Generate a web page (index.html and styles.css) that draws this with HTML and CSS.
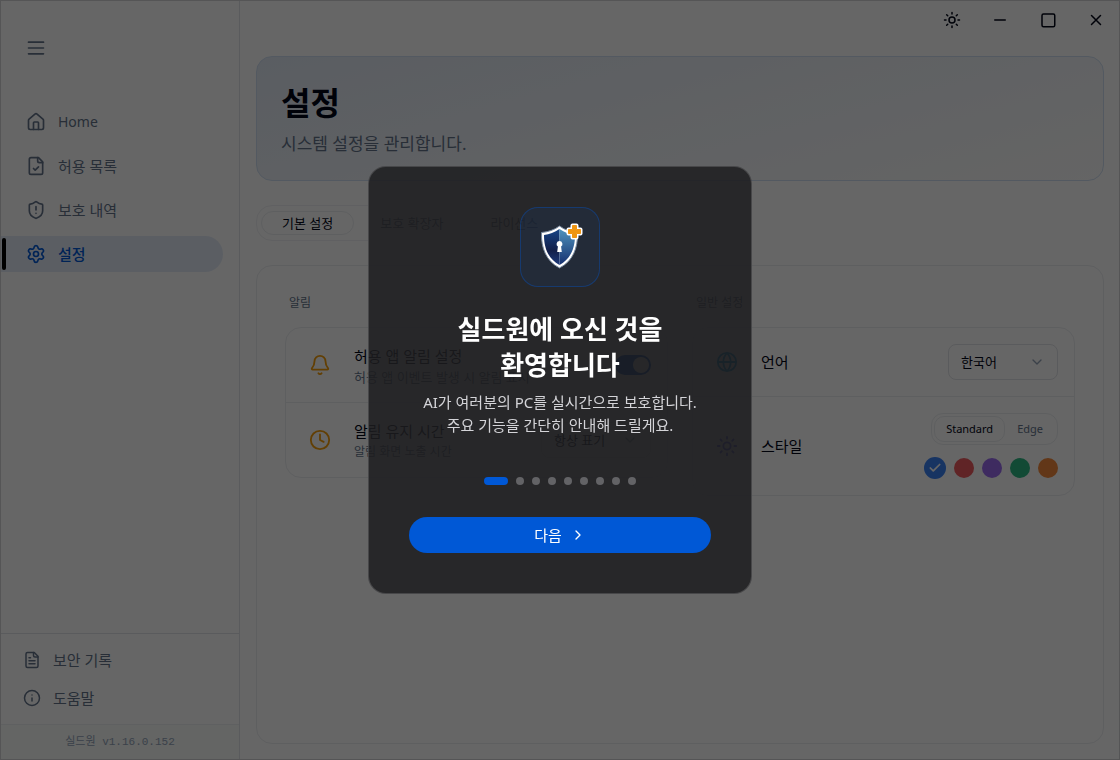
FILE: index.html
```html
<!DOCTYPE html>
<html lang="ko">

<head>
  <meta charset="utf-8">
  <title>실드원</title>
  <link rel="stylesheet" href="styles.css">
</head>

<body>

  <div class="app">

    <aside class="sidebar">
      <button class="menu-button" aria-label="메뉴">
        <svg class="icon" width="20" height="20" viewBox="0 0 24 24"><path d="M3 5h18M3 12h18M3 19h18"/></svg>
      </button>

      <nav class="nav">
        <a class="nav-item latin" href="#">
          <svg class="icon" width="20" height="20" viewBox="0 0 24 24"><path d="M15 21v-8a1 1 0 0 0-1-1h-4a1 1 0 0 0-1 1v8"/><path d="M3 10a2 2 0 0 1 .7-1.5l7-6a2 2 0 0 1 2.6 0l7 6A2 2 0 0 1 21 10v9a2 2 0 0 1-2 2H5a2 2 0 0 1-2-2z"/></svg>
          Home
        </a>
        <a class="nav-item" href="#">
          <svg class="icon" width="20" height="20" viewBox="0 0 24 24"><path d="M15 2H6a2 2 0 0 0-2 2v16a2 2 0 0 0 2 2h12a2 2 0 0 0 2-2V7z"/><path d="M14 2v4a2 2 0 0 0 2 2h4"/><path d="m9 15 2 2 4-4"/></svg>
          허용 목록
        </a>
        <a class="nav-item" href="#">
          <svg class="icon" width="20" height="20" viewBox="0 0 24 24"><path d="M20 13c0 5-3.5 7.500-7.660 8.950a1 1 0 0 1-.67-.01C7.500 20.500 4 18 4 13V6a1 1 0 0 1 1-1c2 0 4.500-1.200 6.240-2.720a1.170 1.170 0 0 1 1.520 0C14.510 3.810 17 5 19 5a1 1 0 0 1 1 1z"/><path d="M12 8v4M12 16h.01"/></svg>
          보호 내역
        </a>
        <a class="nav-item active" href="#">
          <svg class="icon" width="20" height="20" viewBox="0 0 24 24"><path d="M9.670 4.140a2.340 2.340 0 0 1 4.660 0 2.340 2.340 0 0 0 3.320 1.910 2.340 2.340 0 0 1 2.330 4.030 2.340 2.340 0 0 0 0 3.840 2.340 2.340 0 0 1-2.330 4.030 2.340 2.340 0 0 0-3.320 1.910 2.340 2.340 0 0 1-4.660 0 2.340 2.340 0 0 0-3.320-1.910 2.340 2.340 0 0 1-2.330-4.030 2.340 2.340 0 0 0 0-3.840 2.340 2.340 0 0 1 2.330-4.030 2.340 2.340 0 0 0 3.320-1.910"/><circle cx="12" cy="12" r="3"/></svg>
          설정
        </a>
      </nav>

      <div class="side-links">
        <a class="side-link" href="#">
          <svg class="icon" width="18" height="18" viewBox="0 0 24 24"><path d="M15 2H6a2 2 0 0 0-2 2v16a2 2 0 0 0 2 2h12a2 2 0 0 0 2-2V7z"/><path d="M14 2v4a2 2 0 0 0 2 2h4M10 9H8M16 13H8M16 17H8"/></svg>
          보안 기록
        </a>
        <a class="side-link" href="#">
          <svg class="icon" width="18" height="18" viewBox="0 0 24 24"><circle cx="12" cy="12" r="10"/><path d="M12 16v-4M12 8h.01"/></svg>
          도움말
        </a>
      </div>
      <div class="version">실드원 v1.16.0.152</div>
    </aside>

    <div class="main">
      <div class="titlebar">
        <button class="window-button" aria-label="테마">
          <svg class="icon" width="18" height="18" viewBox="0 0 24 24"><circle cx="12" cy="12" r="4"/><path d="M12 2v2M12 20v2M4.900 4.900l1.400 1.400M17.700 17.700l1.400 1.400M2 12h2M20 12h2M6.300 17.700l-1.400 1.400M19.100 4.900l-1.400 1.400"/></svg>
        </button>
        <button class="window-button" aria-label="최소화">
          <svg class="icon" width="18" height="18" viewBox="0 0 24 24"><path d="M5 12h14"/></svg>
        </button>
        <button class="window-button" aria-label="최대화">
          <svg class="icon" width="18" height="18" viewBox="0 0 24 24"><rect x="4" y="4" width="17" height="17" rx="2"/></svg>
        </button>
        <button class="window-button" aria-label="닫기">
          <svg class="icon" width="18" height="18" viewBox="0 0 24 24"><path d="M18 6 6 18M6 6l12 12"/></svg>
        </button>
      </div>

      <main class="content">
        <header class="banner">
          <h1>설정</h1>
          <p>시스템 설정을 관리합니다.</p>
        </header>

        <div class="tabs">
          <button class="tab active">기본 설정</button>
          <button class="tab">보호 확장자</button>
          <button class="tab">라이선스</button>
        </div>

        <div class="panel">
          <section class="column">
            <h2>알림</h2>
            <div class="group">
              <div class="row">
                <svg class="icon amber" width="22" height="22" viewBox="0 0 24 24"><path d="M10.270 21a2 2 0 0 0 3.460 0"/><path d="M3.260 15.330A1 1 0 0 0 4 17h16a1 1 0 0 0 .74-1.670C19.410 13.960 18 12.500 18 8A6 6 0 0 0 6 8c0 4.500-1.410 5.960-2.740 7.330"/></svg>
                <label class="row-text" for="appAlarm">
                  <span class="row-title">허용 앱 알림 설정</span>
                  <span class="row-desc">허용 앱 이벤트 발생 시 알림 표시</span>
                </label>
                <input class="toggle" type="checkbox" id="appAlarm" checked>
              </div>
              <div class="row">
                <svg class="icon amber" width="22" height="22" viewBox="0 0 24 24"><circle cx="12" cy="12" r="10"/><path d="M12 6v6l4 2"/></svg>
                <label class="row-text" for="alarmTime">
                  <span class="row-title">알림 유지 시간</span>
                  <span class="row-desc small">알림 화면 노출 시간</span>
                </label>
                <div class="select">
                  <select id="alarmTime">
                    <option>항상 표기</option>
                  </select>
                  <svg class="icon chevron" width="16" height="16" viewBox="0 0 24 24"><path d="m6 9 6 6 6-6"/></svg>
                </div>
              </div>
            </div>
          </section>

          <section class="column">
            <h2>일반 설정</h2>
            <div class="group">
              <div class="row">
                <svg class="icon sky" width="22" height="22" viewBox="0 0 24 24"><circle cx="12" cy="12" r="10"/><path d="M12 2a14.500 14.500 0 0 0 0 20 14.500 14.500 0 0 0 0-20M2 12h20"/></svg>
                <label class="row-text" for="language">
                  <span class="row-title">언어</span>
                </label>
                <div class="select">
                  <select id="language">
                    <option>한국어</option>
                  </select>
                  <svg class="icon chevron" width="16" height="16" viewBox="0 0 24 24"><path d="m6 9 6 6 6-6"/></svg>
                </div>
              </div>
              <div class="row">
                <svg class="icon violet" width="22" height="22" viewBox="0 0 24 24"><circle cx="12" cy="12" r="4"/><path d="M12 2v2M12 20v2M4.900 4.900l1.400 1.400M17.700 17.700l1.400 1.400M2 12h2M20 12h2M6.300 17.700l-1.400 1.400M19.100 4.900l-1.400 1.400"/></svg>
                <div class="row-text">
                  <span class="row-title">스타일</span>
                </div>
                <div class="style-picker">
                  <div class="segmented">
                    <button class="segment active">Standard</button>
                    <button class="segment">Edge</button>
                  </div>
                  <div class="swatches">
                    <label class="swatch blue"><input type="radio" name="accent" aria-label="파랑" checked><svg class="icon" width="14" height="14" viewBox="0 0 24 24"><path d="M20 6 9 17l-5-5"/></svg></label>
                    <label class="swatch red"><input type="radio" name="accent" aria-label="빨강"></label>
                    <label class="swatch purple"><input type="radio" name="accent" aria-label="보라"></label>
                    <label class="swatch green"><input type="radio" name="accent" aria-label="초록"></label>
                    <label class="swatch orange"><input type="radio" name="accent" aria-label="주황"></label>
                  </div>
                </div>
              </div>
            </div>
          </section>
        </div>
      </main>
    </div>
  </div>

  <div class="overlay">
    <div class="modal" role="dialog" aria-modal="true" aria-labelledby="welcomeTitle">
      <div class="logo">
        <svg width="46" height="48" viewBox="0 0 46 48">
          <defs>
            <linearGradient id="shieldLeft" x1="0" y1="0" x2="0" y2="1">
              <stop offset="0" stop-color="#174486"/>
              <stop offset="0.600" stop-color="#13204a"/>
              <stop offset="1" stop-color="#1d3a7c"/>
            </linearGradient>
            <linearGradient id="shieldRight" x1="0" y1="0" x2="0" y2="1">
              <stop offset="0" stop-color="#4f93bd"/>
              <stop offset="1" stop-color="#16306f"/>
            </linearGradient>
          </defs>
          <path d="M22.500 3C17 7 11 9 4.500 9.500 4 25 9 38 22.500 45 36 38 41 25 40.500 9.500 34 9 28 7 22.500 3z" fill="#fff" stroke="#75879d" stroke-width="1"/>
          <path d="M22.500 6C17.500 9.500 12.500 11.300 7 12c0 13 4 23.500 15.500 30z" fill="url(#shieldLeft)"/>
          <path d="M22.500 6c5 3.500 10 5.300 15.500 6 0 13-4 23.500-15.500 30z" fill="url(#shieldRight)"/>
          <path d="M22.500 18a3 3 0 0 1 1.600 5.500l.7 5.500h-4.600l.7-5.500a3 3 0 0 1 1.600-5.500z" fill="#fff"/>
          <path d="M35.500 2.500h4v4h4v4h-4v4h-4v-4h-4v-4h4z" fill="#fff" stroke="#fff" stroke-width="4" stroke-linejoin="round"/>
          <path d="M35.500 2.500h4v4h4v4h-4v4h-4v-4h-4v-4h4z" fill="#ee9512" stroke="#ee9512" stroke-width="1"/>
        </svg>
      </div>
      <h2 id="welcomeTitle">실드원에 오신 것을<br>환영합니다</h2>
      <p>AI가 여러분의 PC를 실시간으로 보호합니다.<br>주요 기능을 간단히 안내해 드릴게요.</p>
      <div class="dots">
        <span class="dot active"></span>
        <span class="dot"></span>
        <span class="dot"></span>
        <span class="dot"></span>
        <span class="dot"></span>
        <span class="dot"></span>
        <span class="dot"></span>
        <span class="dot"></span>
        <span class="dot"></span>
      </div>
      <button class="next-button">
        다음
        <svg class="icon" width="16" height="16" viewBox="0 0 24 24"><path d="m9 18 6-6-6-6"/></svg>
      </button>
    </div>
  </div>

</body>

</html>
```

FILE: styles.css
```css
* {
  box-sizing: border-box;
}

body {
  margin: 0;
  background: #fff;
  color: #020617;
  font: 15px/20px "Noto Sans", "Noto Sans CJK KR", sans-serif;
}

h1,
h2,
p {
  margin: 0;
}

a {
  color: inherit;
  text-decoration: none;
}

button,
select {
  border: none;
  background: none;
  color: inherit;
  font: inherit;
  padding: 0;
  cursor: pointer;
}

.icon {
  flex: none;
  fill: none;
  stroke: currentColor;
  stroke-width: 2;
  stroke-linecap: round;
  stroke-linejoin: round;
}

.app {
  display: flex;
  min-height: 100vh;
  border: 1px solid #d4d4d8;
}

/* Sidebar */
.sidebar {
  display: flex;
  flex-direction: column;
  width: 239px;
  flex: none;
  border-right: 1px solid #e2e4e8;
  color: #64748b;
}

.menu-button {
  display: flex;
  align-self: flex-start;
  margin: 37px 0 0 25px;
}

.nav {
  display: flex;
  flex-direction: column;
  gap: 8px;
  flex: 1;
  margin-top: 46px;
  padding-right: 16px;
}

.nav-item {
  display: flex;
  align-items: center;
  gap: 12px;
  height: 36px;
  padding-left: 25px;
  border-radius: 0 18px 18px 0;
}

.nav-item.latin {
  font-size: 14px;
}

.nav-item.active {
  position: relative;
  background: #e4ecf8;
  color: #0058d6;
  font-weight: 500;
}

.nav-item.active::before {
  content: "";
  position: absolute;
  left: 1px;
  top: 2px;
  bottom: 2px;
  width: 4px;
  border-radius: 2px;
  background: #000;
}

.side-links {
  padding: 7px 22px;
  border-top: 1px solid #e2e4e8;
}

.side-link {
  display: flex;
  align-items: center;
  gap: 12px;
  height: 38px;
}

.version {
  padding: 8px;
  border-top: 1px solid #eeeff2;
  background: #f9fcfa;
  color: #94a3b8;
  font: 11px/18px "Liberation Mono", "Noto Sans CJK KR", monospace;
  text-align: center;
}

/* Main area */
.main {
  display: flex;
  flex-direction: column;
  flex: 1;
  min-width: 0;
}

.titlebar {
  display: flex;
  justify-content: flex-end;
  height: 38px;
  margin-right: -1px;
}

.window-button {
  display: flex;
  align-items: center;
  justify-content: center;
  width: 48px;
}

.content {
  display: flex;
  flex-direction: column;
  flex: 1;
  gap: 24px;
  padding: 17px 15px 15px 16px;
}

.banner {
  padding: 24px;
  border: 1px solid #cfdff2;
  border-radius: 16px;
  background: linear-gradient(165deg, #e1e9f5, #eff3f8 50%, #fcfcfc);
}

.banner h1 {
  font-size: 32px;
  line-height: 44px;
  font-weight: 700;
}

.banner p {
  margin-top: 7px;
  color: #64748b;
  font-size: 17px;
  line-height: 24px;
}

.tabs {
  display: flex;
  align-self: flex-start;
  gap: 5px;
  padding: 5px 4px;
  border: 1px solid #f0f1f4;
  border-radius: 16px;
}

.tab {
  padding: 1px 20px;
  border: 1px solid transparent;
  border-radius: 12px;
  color: #64748b;
  font-size: 13px;
}

.tab.active {
  border-color: #eceef1;
  color: #020617;
}

.panel {
  display: flex;
  flex: 1;
  align-items: flex-start;
  gap: 24px;
  padding: 28px;
  border: 1px solid #eceef1;
  border-radius: 16px;
}

.column {
  flex: 1;
  min-width: 0;
}

.column h2 {
  margin-bottom: 16px;
  padding-left: 4px;
  color: #64748b;
  font-size: 12px;
  line-height: 17px;
  font-weight: 400;
}

.group {
  border: 1px solid #eceef1;
  border-radius: 16px;
}

.row {
  display: flex;
  align-items: center;
  gap: 23px;
  padding: 16px 16px 16px 23px;
}

.row + .row {
  border-top: 1px solid #eceef1;
}

.row-text {
  flex: 1;
}

.row-title,
.row-desc {
  display: block;
}

.row-title {
  line-height: 24px;
}

.row-desc {
  color: #64748b;
  font-size: 13px;
  line-height: 18px;
}

.row-desc.small {
  font-size: 12px;
}

.amber {
  color: #f59e0b;
}

.sky {
  color: #0ea5e9;
}

.violet {
  color: #6366f1;
}

.toggle {
  appearance: none;
  width: 36px;
  height: 20px;
  margin: 0;
  padding: 2px;
  border-radius: 10px;
  background: #cbd5e1;
}

.toggle::before {
  content: "";
  display: block;
  width: 16px;
  height: 16px;
  border-radius: 50%;
  background: #fff;
}

.toggle:checked {
  background: #0058d6;
}

.toggle:checked::before {
  margin-left: 16px;
}

.select {
  position: relative;
  width: 110px;
}

.select select {
  appearance: none;
  width: 100%;
  height: 36px;
  padding: 0 12px;
  border: 1px solid #e2e4e8;
  border-radius: 8px;
  font-size: 13px;
}

.chevron {
  position: absolute;
  right: 13px;
  top: 10px;
  color: #94a3b8;
  pointer-events: none;
}

.style-picker {
  display: flex;
  flex-direction: column;
  align-items: flex-end;
  gap: 12px;
}

.segmented {
  display: flex;
  padding: 2px;
  border: 1px solid #eceef1;
  border-radius: 12px;
}

.segment {
  padding: 2px 11px;
  border: 1px solid transparent;
  border-radius: 10px;
  color: #64748b;
  font-size: 11px;
}

.segment.active {
  border-color: #eceef1;
  color: #020617;
}

.swatches {
  display: flex;
  align-items: center;
  gap: 8px;
}

.swatch {
  display: flex;
  align-items: center;
  justify-content: center;
  width: 20px;
  height: 20px;
  border-radius: 50%;
  color: #fff;
}

.swatch input {
  position: absolute;
  appearance: none;
  margin: 0;
}

.swatch .icon {
  stroke-width: 3;
}

.swatch.blue {
  width: 22px;
  height: 22px;
  background: #3b82f6;
}

.swatch.red {
  background: #ef5b5f;
}

.swatch.purple {
  background: #9b6cf0;
}

.swatch.green {
  background: #2fb885;
}

.swatch.orange {
  background: #f58a3c;
}

/* Welcome dialog */
.overlay {
  position: fixed;
  inset: 0;
  z-index: 10;
  display: flex;
  align-items: center;
  justify-content: center;
  background: rgba(0, 0, 0, 0.6);
}

.modal {
  display: flex;
  flex-direction: column;
  align-items: center;
  width: 384px;
  padding: 40px;
  border: 1px solid rgba(255, 255, 255, 0.15);
  border-radius: 18px;
  background: rgba(28, 28, 30, 0.85);
  color: #fff;
  text-align: center;
}

.logo {
  display: flex;
  align-items: center;
  justify-content: center;
  width: 80px;
  height: 80px;
  border: 1px solid rgba(0, 88, 214, 0.35);
  border-radius: 18px;
  background: rgba(20, 60, 120, 0.2);
}

.modal h2 {
  margin-top: 24px;
  font-size: 26px;
  line-height: 36px;
  font-weight: 700;
}

.modal p {
  margin-top: 8px;
  color: #d4d4d8;
  line-height: 23px;
  white-space: nowrap;
}

.dots {
  display: flex;
  gap: 8px;
  margin-top: 40px;
}

.dot {
  width: 8px;
  height: 8px;
  border-radius: 4px;
  background: #636366;
}

.dot.active {
  width: 24px;
  background: #0058d6;
}

.next-button {
  display: flex;
  align-items: center;
  justify-content: center;
  gap: 8px;
  width: 100%;
  height: 36px;
  margin-top: 32px;
  border-radius: 18px;
  background: #0058d6;
}
```
